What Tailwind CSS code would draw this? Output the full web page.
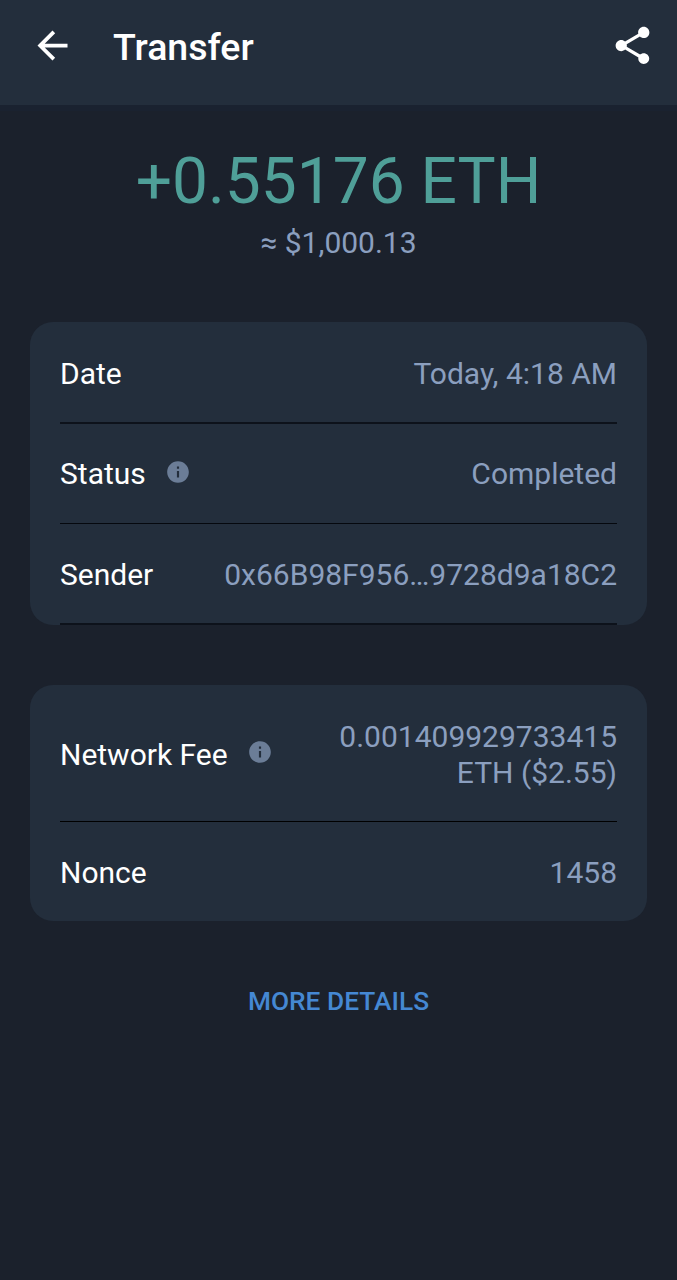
<!DOCTYPE html>
<html lang="en">
<head>
    <meta charset="UTF-8">
    <meta name="viewport" content="width=device-width, initial-scale=1.0">
    <title>Transfer</title>
    <script src="https://cdn.jsdelivr.net/npm/@tailwindcss/browser@4"></script>
</head>
<body class="min-h-screen bg-[#1b212c] font-['Roboto',sans-serif] text-[30px] leading-9 text-white">
    <!-- Header -->
    <header class="flex h-[105px] items-start bg-[#232e3c] pt-[22.5px] pr-[22.5px] pl-[30px] shadow-[0_6px_0_#1a2230]">
        <button aria-label="Back">
            <svg class="size-[45px]" viewBox="0 0 24 24" fill="currentColor">
                <path d="M20 11H7.83l5.59-5.59L12 4l-8 8 8 8 1.41-1.41L7.83 13H20v-2z"/>
            </svg>
        </button>
        <h1 class="ml-[38px] flex-1 text-[37.5px] leading-12 font-medium">Transfer</h1>
        <button aria-label="Share">
            <svg class="size-[45px]" viewBox="0 0 24 24" fill="currentColor">
                <path d="M18 16.08c-.76 0-1.44.3-1.96.77L8.91 12.7c.05-.23.09-.46.09-.7s-.04-.47-.09-.7l7.05-4.11c.54.5 1.25.81 2.04.81 1.66 0 3-1.34 3-3s-1.34-3-3-3-3 1.34-3 3c0 .24.04.47.09.7L8.04 9.81C7.5 9.31 6.79 9 6 9c-1.66 0-3 1.34-3 3s1.34 3 3 3c.79 0 1.5-.31 2.04-.81l7.12 4.16c-.05.21-.08.43-.08.65 0 1.61 1.31 2.92 2.92 2.92s2.92-1.31 2.92-2.92-1.31-2.92-2.92-2.92z"/>
            </svg>
        </button>
    </header>

    <main class="px-[30px]">
        <!-- Amount -->
        <section class="h-[217px] pt-[39px] text-center">
            <p class="text-[64px] leading-[76px] text-[#4f9f98]">+0.55176 ETH</p>
            <p class="mt-[5px] text-[#8b9fbf]">≈ $1,000.13</p>
        </section>

        <!-- Transaction -->
        <section class="rounded-[23px] bg-[#232e3c] px-[30px]">
            <div class="flex h-[102px] items-center justify-between border-b-2 border-[#0d121b] pt-[4px]">
                <span>Date</span>
                <span class="text-[#8b9fbf]">Today, 4:18 AM</span>
            </div>
            <div class="flex h-[100px] items-center justify-between border-b border-[#05080e]">
                <div class="flex items-center">
                    <span>Status</span>
                    <svg class="mb-[4px] ml-[19px] size-[26px] text-[#6b7d97]" viewBox="0 0 24 24" fill="currentColor">
                        <path d="M12 2C6.48 2 2 6.48 2 12s4.48 10 10 10 10-4.48 10-10S17.52 2 12 2zm1 15h-2v-6h2v6zm0-8h-2V7h2v2z"/>
                    </svg>
                </div>
                <span class="text-[#8b9fbf]">Completed</span>
            </div>
            <div class="flex h-[101px] items-center justify-between border-b-2 border-[#0d121b] pt-[3px]">
                <span>Sender</span>
                <span class="text-[#8b9fbf]">0x66B98F956…9728d9a18C2</span>
            </div>
        </section>

        <!-- Fee -->
        <section class="mt-[60px] rounded-[23px] bg-[#232e3c] px-[30px]">
            <div class="flex h-[137px] items-center justify-between border-b border-black pt-[3px]">
                <div class="flex items-center">
                    <span>Network Fee</span>
                    <svg class="mb-[5px] ml-[19.5px] size-[26px] text-[#6b7d97]" viewBox="0 0 24 24" fill="currentColor">
                        <path d="M12 2C6.48 2 2 6.48 2 12s4.48 10 10 10 10-4.48 10-10S17.52 2 12 2zm1 15h-2v-6h2v6zm0-8h-2V7h2v2z"/>
                    </svg>
                </div>
                <span class="text-right text-[#8b9fbf]">0.001409929733415<br>ETH ($2.55)</span>
            </div>
            <div class="flex h-[99px] items-center justify-between pt-[3px]">
                <span>Nonce</span>
                <span class="text-[#8b9fbf]">1458</span>
            </div>
        </section>

        <div class="mt-[61px] text-center">
            <button class="text-[26.3px] leading-8 font-medium text-[#4588d3]">MORE DETAILS</button>
        </div>
    </main>
</body>
</html>
